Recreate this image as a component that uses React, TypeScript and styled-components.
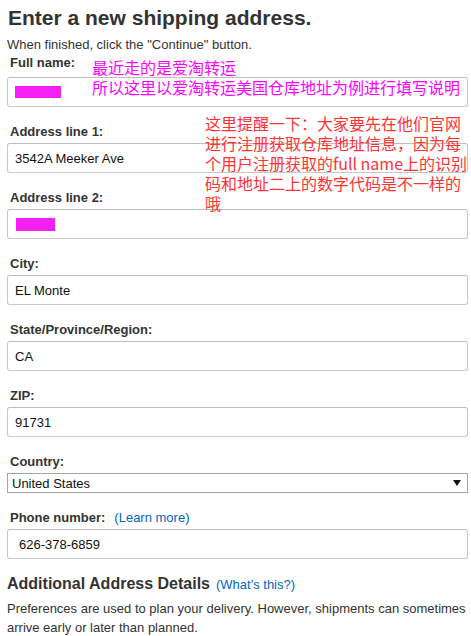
import React from "react";
import styled, { createGlobalStyle } from "styled-components";

const GlobalStyle = createGlobalStyle`
  html, body {
    margin: 0;
    padding: 0;
    background: #fff;
  }
  body {
    font-family: "Liberation Sans", Arial, "Noto Sans CJK SC", sans-serif;
    color: #333;
  }
`;

const Page = styled.div`
  position: relative;
  width: 461px;
  padding: 6px 0 0 7px;
`;

const Title = styled.h1`
  margin: 0 0 0 1px;
  font-size: 21px;
  line-height: 24px;
  font-weight: 700;
  color: #333;
`;

const Intro = styled.p`
  margin: 7px 0 0;
  font-size: 13px;
  line-height: 15px;
  color: #333;
`;

const Field = styled.div<{ $first?: boolean }>`
  display: flex;
  flex-direction: column;
  margin-top: ${(p) => (p.$first ? "2px" : "16px")};
`;

const LabelRow = styled.div<{ $first?: boolean }>`
  display: flex;
  align-items: baseline;
  gap: 9px;
  margin: 0 0 ${(p) => (p.$first ? "5px" : "2px")} 3px;
`;

const Label = styled.label`
  font-size: 13px;
  line-height: 18px;
  font-weight: 700;
  color: #333;
`;

const Link = styled.a`
  font-size: 13px;
  font-weight: 400;
  color: #0066c0;
  text-decoration: none;
`;

const Input = styled.div<{ $indent?: number }>`
  display: flex;
  align-items: center;
  box-sizing: border-box;
  height: 30px;
  padding-left: ${(p) => p.$indent ?? 7}px;
  border: 1px solid #c8c8c8;
  border-top-color: #bdbdbd;
  border-radius: 3px;
  font-size: 13px;
  color: #111;
`;

const Redacted = styled.span<{ $w: number; $h: number }>`
  display: block;
  width: ${(p) => p.$w}px;
  height: ${(p) => p.$h}px;
  background: #f520f5;
`;

const Select = styled.div`
  display: flex;
  align-items: center;
  justify-content: space-between;
  box-sizing: border-box;
  height: 20px;
  padding: 0 6px 0 4px;
  border: 1px solid #a6a6a6;
  font-size: 13px;
  color: #111;
`;

const SectionTitle = styled.h2`
  display: flex;
  align-items: baseline;
  gap: 6px;
  margin: 15px 0 0;
  font-size: 16px;
  line-height: 20px;
  font-weight: 700;
  color: #333;
`;

const Note = styled.p`
  margin: 4px 0 0;
  font-size: 13px;
  line-height: 19px;
  color: #333;
`;

const Annotation = styled.div<{ $color: string; $left: number; $top: number }>`
  position: absolute;
  left: ${(p) => p.$left}px;
  top: ${(p) => p.$top}px;
  font-family: "Noto Sans CJK SC", "Liberation Sans", sans-serif;
  font-size: 16px;
  line-height: 20px;
  color: ${(p) => p.$color};
  white-space: pre;
  pointer-events: none;
`;

const Arrow = () => (
  <svg width="8" height="6" viewBox="0 0 8 6">
    <path d="M0 0h8L4 6z" fill="#111" />
  </svg>
);

export default function App() {
  return (
    <>
      <GlobalStyle />
      <Page>
        <Title>Enter a new shipping address.</Title>
        <Intro>When finished, click the "Continue" button.</Intro>

        <Field $first>
          <LabelRow $first>
            <Label>Full name:</Label>
          </LabelRow>
          <Input>
            <Redacted $w={46} $h={12} />
          </Input>
        </Field>

        <Field>
          <LabelRow>
            <Label>Address line 1:</Label>
          </LabelRow>
          <Input>3542A Meeker Ave</Input>
        </Field>

        <Field>
          <LabelRow>
            <Label>Address line 2:</Label>
          </LabelRow>
          <Input $indent={8}>
            <Redacted $w={39} $h={13} />
          </Input>
        </Field>

        <Field>
          <LabelRow>
            <Label>City:</Label>
          </LabelRow>
          <Input>EL Monte</Input>
        </Field>

        <Field>
          <LabelRow>
            <Label>State/Province/Region:</Label>
          </LabelRow>
          <Input>CA</Input>
        </Field>

        <Field>
          <LabelRow>
            <Label>ZIP:</Label>
          </LabelRow>
          <Input>91731</Input>
        </Field>

        <Field>
          <LabelRow>
            <Label>Country:</Label>
          </LabelRow>
          <Select>
            <span>United States</span>
            <Arrow />
          </Select>
        </Field>

        <Field>
          <LabelRow>
            <Label>Phone number:</Label>
            <Link href="#">(Learn more)</Link>
          </LabelRow>
          <Input $indent={11}>626-378-6859</Input>
        </Field>

        <SectionTitle>
          Additional Address Details
          <Link href="#">(What's this?)</Link>
        </SectionTitle>
        <Note>
          Preferences are used to plan your delivery. However, shipments can sometimes arrive
          early or later than planned.
        </Note>

        <Annotation $color="#f0f" $left={92} $top={57}>
          {"最近走的是爱淘转运\n所以这里以爱淘转运美国仓库地址为例进行填写说明"}
        </Annotation>
        <Annotation $color="#f33" $left={205} $top={113}>
          {"这里提醒一下：大家要先在他们官网\n进行注册获取仓库地址信息，因为每\n个用户注册获取的full name上的识别\n码和地址二上的数字代码是不一样的\n哦"}
        </Annotation>
      </Page>
    </>
  );
}
